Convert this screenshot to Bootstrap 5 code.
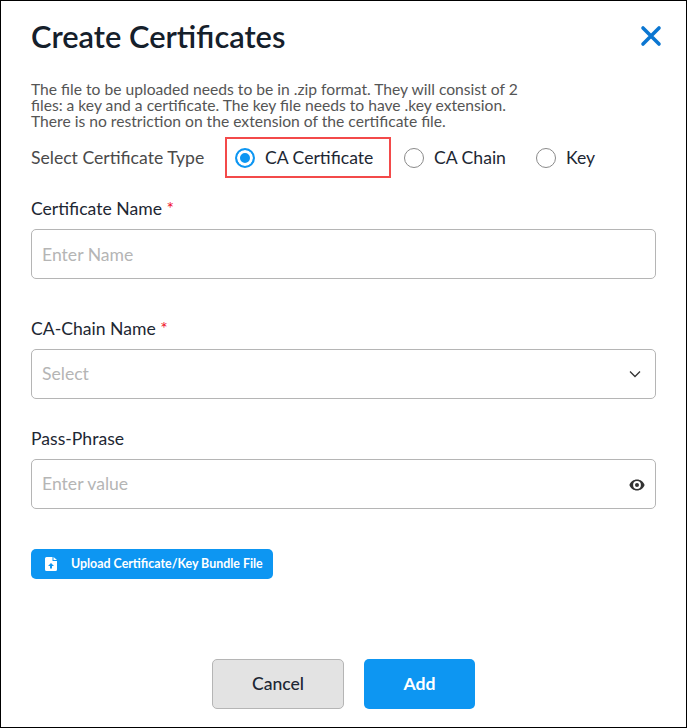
<!DOCTYPE html>
<html lang="en">
<head>
<meta charset="utf-8">
<title>Create Certificates</title>
<link rel="stylesheet" href="https://cdn.jsdelivr.net/npm/bootstrap@5.3.0/dist/css/bootstrap.min.css">
<style>
html,body{height:100%;margin:0;background:#fff}
body{font-family:Lato,"Liberation Sans",sans-serif;color:#1d2733}
.dlg{width:687px;height:728px;border:1px solid #000;padding:0 30px;display:flex;flex-direction:column;background:#fff}
.ttl{font-size:30.8px;font-weight:600;line-height:36px;margin:18px 0 0;color:#15202b}
.x{width:22px;height:22px;margin:0 -6px 0 0;padding:0;border:0;background:none;line-height:0}
.hint{font-size:15.65px;line-height:16px;color:#555;margin:26px 0 0;width:492px}
.type-row{height:41px;margin-top:8px;padding-top:2px}
.type-lbl{font-size:17.6px;color:#4a4a4a;width:194px}
.rad{display:flex;align-items:center;font-size:17.6px;color:#1d2733;margin:0}
.rad i{display:block;width:20px;height:20px;border-radius:50%;border:1px solid #8a8a8a;margin-right:10px;flex:none}
.rad.on i{border:2px solid #0d96f2;background:#0d96f2;box-shadow:inset 0 0 0 3px #fff}
.rad.box{border:2px solid #f34a4a;width:166px;height:41px;padding:1px 0 0 8px;align-self:flex-start;margin-top:-2px}
.rad.second{margin-left:13px}
.rad.third{margin-left:30px}
.lbl{font-size:17.6px;line-height:20px;margin:0 0 10px;color:#1d2733;display:block}
.lbl span{color:#f0142f}
.field{height:50px;border:1px solid #b5b5b5;border-radius:5px;padding:0 10px;font-size:17.6px;color:#b5b5b5;width:625px}
.field::placeholder{color:#b5b5b5;opacity:1}
.pass{padding-top:1px}
.f1{margin-top:21px}.f2{margin-top:40px}.f3{margin-top:30px}
.upload{background:#0d96f2;color:#fff;font-size:12.4px;font-weight:700;height:30px;width:242px;border-radius:5px;border:0;margin-top:40px;padding:0 0 0 14px;gap:14px}
.acts{margin-top:auto;margin-bottom:18px;gap:20px}
.acts .btn{height:50px;font-size:17.6px;font-weight:700;border-radius:5px}
.cancel{width:132px;background:#e3e3e3;border:1px solid #b5b5b5;color:#1d2733;font-weight:500!important}
.add{width:111px;background:#0d96f2;border:0;color:#fff}
</style>
</head>
<body>
<div class="dlg">
  <div class="d-flex justify-content-between align-items-center">
    <h1 class="ttl">Create Certificates</h1>
    <button class="x mt-3" aria-label="Close"><svg width="22" height="22" viewBox="0 0 22 22"><path d="M3 3 19 19M19 3 3 19" stroke="#0b76d1" stroke-width="3.6" stroke-linecap="round"/></svg></button>
  </div>
  <p class="hint">The file to be uploaded needs to be in .zip format. They will consist of 2 files: a key and a certificate. The key file needs to have .key extension. There is no restriction on the extension of the certificate file.</p>
  <div class="type-row d-flex align-items-center">
    <div class="type-lbl">Select Certificate Type</div>
    <label class="rad on box"><i></i>CA Certificate</label>
    <label class="rad second"><i></i>CA Chain</label>
    <label class="rad third"><i></i>Key</label>
  </div>
  <div class="f1">
    <label class="lbl">Certificate Name <span>*</span></label>
    <input class="field d-block" placeholder="Enter Name">
  </div>
  <div class="f2">
    <label class="lbl">CA-Chain Name <span>*</span></label>
    <div class="field d-flex align-items-center justify-content-between">Select
      <svg width="12" height="8" viewBox="0 0 12 8" class="me-1"><path d="M1 1.500 6 6.500 11 1.500" fill="none" stroke="#333" stroke-width="1.300"/></svg>
    </div>
  </div>
  <div class="f3">
    <label class="lbl">Pass-Phrase</label>
    <div class="field pass d-flex align-items-center justify-content-between">Enter value
      <svg width="16" height="12" viewBox="0 0 16 12"><path fill-rule="evenodd" fill="#333" d="M8 .5C4.500.5 1.600 2.700.4 6c1.200 3.300 4.100 5.500 7.600 5.500s6.400-2.200 7.600-5.500C14.400 2.700 11.500.5 8 .5Zm0 9.400A3.900 3.900 0 1 1 8 2.100a3.900 3.900 0 0 1 0 7.800Zm0-5.900a2 2 0 1 0 0 4 2 2 0 0 0 0-4Z"/></svg>
    </div>
  </div>
  <button class="upload d-flex align-items-center">
    <svg width="12" height="14" viewBox="0 0 12 14"><path fill="#fff" d="M1.500 0H7.500V4H12V12.500A1.500 1.500 0 0 1 10.500 14H1.500A1.500 1.500 0 0 1 0 12.500V1.500A1.500 1.500 0 0 1 1.500 0ZM8.500 0 12 3H8.500Z"/><path fill="#0d96f2" d="M6 6 9 9H7V11.500H5V9H3Z"/></svg>
    Upload Certificate/Key Bundle File
  </button>
  <div class="acts d-flex justify-content-center">
    <button class="btn cancel">Cancel</button>
    <button class="btn add">Add</button>
  </div>
</div>
</body>
</html>
